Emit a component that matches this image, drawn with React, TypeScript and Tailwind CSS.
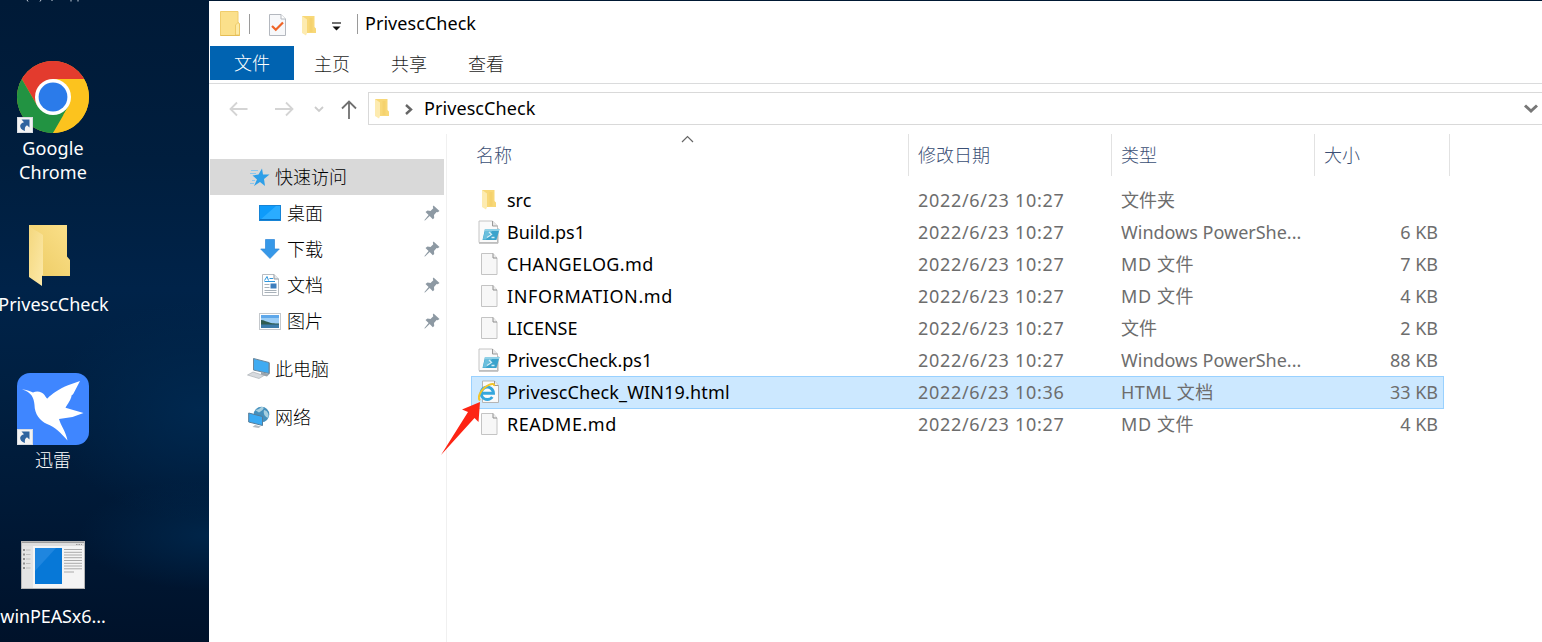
import React from 'react';

const FONT = "font-['Noto_Sans','Noto_Sans_CJK_SC',sans-serif]";

function ShortcutBadge() {
  return (
    <svg className="absolute bottom-0 left-0" width="16" height="16" viewBox="0 0 16 16">
      <rect width="16" height="16" fill="#f3f3f3" />
      <rect x=".5" y=".5" width="15" height="15" fill="none" stroke="#d8dce2" />
      <path d="M4.500 2.500H12.500V10.500L10 8.300C8 9.500 7.500 11.500 8 14 4.500 13 2.800 10.500 3.200 8.500 3.500 6.800 5 5.800 7 5.200Z" fill="#2f649f" />
    </svg>
  );
}

function ChromeLogo() {
  return (
    <svg width="72" height="72" viewBox="0 0 72 72">
      <circle cx="36" cy="36" r="36" fill="#fcc31e" />
      <path d="M36 36 20.400 45 4.820 18A36 36 0 0 1 67.180 18H36Z" fill="#e33b2e" />
      <path d="M4.820 18 20.400 45 36 54H51.600L36 72A36 36 0 0 1 4.820 18Z" fill="#229342" />
      <path d="M36 72 51.600 45 36 36 20.400 45C24 52 30 54 36 54Z" fill="#229342" />
      <path d="M36 18H67.180A36 36 0 0 1 36 72L51.600 45Z" fill="#fcc31e" />
      <circle cx="36" cy="36" r="18" fill="#fff" />
      <circle cx="36" cy="36" r="14.400" fill="#2b7bea" />
    </svg>
  );
}

function BirdLogo() {
  return (
    <svg width="72" height="72" viewBox="0 0 72 72">
      <rect width="72" height="72" rx="13" fill="#3f86ff" />
      <path d="M5 16.500C9 16.500 13 18 16 19.500 20 17.600 25 18.500 27.500 22 28.500 23.500 29.500 25.500 30.500 25.500 34 21.500 43 15.500 51 12.300L63 8 56.500 20.500 55.800 21.500 54.500 22.500C54.500 26 50.500 31 48.500 34.700L66.500 40 55.500 44 42 46C43.500 52 49 59 50.500 67.500 44 60 38 54 30 51 23 48 17.500 41 17.500 32 17 25 14.500 19 5 16.500Z" fill="#fff" />
    </svg>
  );
}

function BigFolder() {
  return (
    <svg width="42" height="62" viewBox="0 0 42 62">
      <defs>
        <linearGradient id="bigBack" x1="0" y1="1" x2="1" y2="0">
          <stop offset="0" stopColor="#eccb63" />
          <stop offset="1" stopColor="#fbe08a" />
        </linearGradient>
        <linearGradient id="bigFlap" x1="0" y1="0" x2="1" y2="1">
          <stop offset="0" stopColor="#f4d77d" />
          <stop offset="1" stopColor="#fce9a9" />
        </linearGradient>
      </defs>
      <path d="M0 0H38V31.500L41 35V51H0Z" fill="url(#bigBack)" />
      <path d="M0 0C3 4 10 7 14 10V50H13V61L0 52Z" fill="url(#bigFlap)" />
    </svg>
  );
}

function AppWindowIcon() {
  return (
    <svg width="64" height="48" viewBox="0 0 64 48">
      <rect width="64" height="48" fill="#f4f4f4" />
      <rect width="64" height="2" fill="#9d9d9d" />
      <rect y="2" width="64" height="3" fill="#dedede" />
      <path d="M55 3.500h6" stroke="#999" strokeDasharray="1.500 1" />
      <rect y="5" width="12" height="43" fill="#e4e4e4" />
      {[9, 13.5, 18, 22.5, 27].map((y) => (
        <g key={y}>
          <rect x="2" y={y - 1} width="2" height="2" fill="#909090" />
          <path d={`M5 ${y}h4.500`} stroke="#b4b4b4" strokeWidth=".8" />
        </g>
      ))}
      <rect x="14" y="7" width="27" height="36" fill="#0778d7" />
      <path d="M14 7H35L14 30Z" fill="#1f86df" />
      {[8.5, 11.3, 14, 16.7, 19.5, 22.3, 25, 27.8].map((y) => (
        <path key={y} d={`M43 ${y}h18`} stroke="#a2a2a2" strokeWidth=".9" />
      ))}
      <path d="M43 31h10" stroke="#a2a2a2" strokeWidth=".9" />
      <rect x=".5" y=".5" width="63" height="47" fill="none" stroke="#b5b5b5" />
    </svg>
  );
}

function SmallFolder() {
  return (
    <svg width="14" height="20" viewBox="0 0 14 20">
      <path d="M0 0H12.500V11L14 12.500V17H0Z" fill="#f8d878" />
      <path d="M0 0 5 3.500V17L4 19.500 0 17Z" fill="#fdebb0" />
      <path d="M9 2v14" stroke="#f0c95c" strokeWidth="3" opacity=".35" />
    </svg>
  );
}

function TitleFolder() {
  return (
    <svg width="21" height="25" viewBox="0 0 21 25">
      <path d="M.5 .5H18V11L19.500 13V24.500H.5Z" fill="#fbe08b" stroke="#f0cd6c" />
      <path d="M15.500 24V14L18 11.500 19.500 13V24Z" fill="#fdeaa5" stroke="#e8c25c" strokeWidth=".8" />
      <path d="M.5 24.500H19.500" stroke="#e5bd55" />
    </svg>
  );
}

function PageIcon() {
  return (
    <svg width="18" height="22" viewBox="0 0 18 22">
      <path d="M1.500 .5H13L17 5V21.500H1.500Z" fill="#f7f7f7" stroke="#c4c4c4" />
      <path d="M13 .5V5H17" fill="#eee" stroke="#8e8e8e" />
    </svg>
  );
}

function PsIcon() {
  return (
    <svg width="22" height="24" viewBox="0 0 22 24">
      <path d="M1 1H14.500L19.500 6V22.500H1Z" fill="#fafafa" stroke="#c4c4c4" />
      <path d="M1 23.200H20V8" fill="none" stroke="#b0b0b0" />
      <path d="M14.500 1V6H19.500" fill="#e8e8e8" stroke="#999" />
      <path d="M7 9H21.500L18.500 20H4.500Z" fill="#3ba3cc" />
      <path d="M7 9H21.500L21 11H6.500Z" fill="#8fd0e6" />
      <path d="M7 11H14L8 19.500H4.800Z" fill="#6bbfdd" />
      <path d="M11 12 13.500 14.500 9 17.500M13.500 17.500H16.500" fill="none" stroke="#d5eef7" strokeWidth="1.300" />
    </svg>
  );
}

function HtmlIcon() {
  return (
    <svg width="22" height="24" viewBox="0 0 22 24">
      <path d="M4.500 1H16.500L20.500 5.500V22.500H4.500Z" fill="#fafafa" stroke="#b5b5b5" />
      <path d="M16.500 1V5.500H20.500" fill="#eee" stroke="#999" />
      <path d="M3.500 13.200H15.500A6.200 6.200 0 1 0 14.300 17" fill="none" stroke="#35a7dd" strokeWidth="2.900" />
      <path d="M2 20.500C-1.500 17 4 8 11 4.800 14 3.500 16.500 3.500 16 6" fill="none" stroke="#f3c52b" strokeWidth="2" />
    </svg>
  );
}

function CheckPage() {
  return (
    <svg width="17" height="22" viewBox="0 0 17 22">
      <path d="M.5 .5H12L16.500 5V21.500H.5Z" fill="#f7f8fa" stroke="#b4b8bf" />
      <path d="M12 .5V5H16.500" fill="#fff" stroke="#b4b8bf" />
      <path d="M3 12 6.800 15.800 14 8.500" fill="none" stroke="#ef6427" strokeWidth="2.200" />
    </svg>
  );
}

function Pin() {
  return (
    <svg width="16" height="16" viewBox="0 0 16 16">
      <path d="M9.500 .5 15.500 6 13.700 7.200 12.600 6.900 10 10 10.200 13 8.800 14.200 5.700 11 1 15.500.3 15.200 4.600 10 1.500 7 3.500 5.600 6.500 6 9.300 3.200 8.800 1.700Z" fill="#8d99a3" />
    </svg>
  );
}

function StarIcon() {
  return (
    <svg width="20" height="19" viewBox="0 0 20 19">
      <path d="M12 .5 13 6.500 19.500 6.500 14 11 15 18 10 14 4 18 7 11.500 2.500 7.500 8.500 6.500Z" fill="#2e9fe8" />
      <path d="M1 2.500h7M0 5.500h6M2 12.500h3M0 15.500h4" stroke="#8bc7ee" />
    </svg>
  );
}

function DesktopIcon() {
  return (
    <svg width="22" height="16" viewBox="0 0 22 16">
      <rect x=".5" y=".5" width="21" height="15" fill="#0e9bfa" stroke="#1684d6" />
      <path d="M1 15 17 1H21V15Z" fill="#2aacff" />
      <path d="M1 14.500h20" stroke="#0b70c2" />
    </svg>
  );
}

function DownloadIcon() {
  return (
    <svg width="20" height="20" viewBox="0 0 20 20">
      <path d="M5.500 .5H14.500V10H19.300L10 19.500 .7 10H5.500Z" fill="#3698e8" stroke="#2c87d8" strokeWidth=".7" />
    </svg>
  );
}

function DocumentIcon() {
  return (
    <svg width="17" height="22" viewBox="0 0 17 22">
      <path d="M.5 .5H12L16.500 5V21.500H.5Z" fill="#fff" stroke="#b8bdc2" />
      <path d="M12 .5V5H16.500" fill="#e8eaec" stroke="#9299a0" />
      <path d="M2.500 6.500 5 2.500 6.500 6.500M7.500 4.500H11M2.500 7.500H13" stroke="#2c95dc" fill="none" />
      <path d="M2.500 10.500h5M2.500 13.500h5M2.500 16.500h12M2.500 18.500h12" stroke="#a8b1b9" />
      <rect x="8.500" y="9.500" width="6" height="5" fill="#3d7ebd" />
    </svg>
  );
}

function PictureIcon() {
  return (
    <svg width="22" height="17" viewBox="0 0 22 17">
      <rect x=".5" y=".5" width="21" height="16" fill="#fff" stroke="#c4c8cc" />
      <rect x="2" y="2" width="18" height="13" fill="#9bcdf5" />
      <rect x="2" y="2" width="18" height="3" fill="#5fa8ea" />
      <path d="M2 7C5 7 8 9 12 10 16 10.500 20 10.500 20 10.500V12H2Z" fill="#2f5c50" />
      <rect x="2" y="11.500" width="18" height="3.500" fill="#3c7ba8" />
    </svg>
  );
}

function ComputerIcon() {
  return (
    <svg width="24" height="22" viewBox="0 0 24 22">
      <path d="M6.500 .5 22 4.500V15.500L6.500 12Z" fill="#3fabf2" stroke="#6b8599" />
      <path d="M22 4.500 23 5V16L22 15.500Z" fill="#8a97a2" />
      <path d="M14 14V17L20 18.500 22.500 16Z" fill="#98a3ac" />
      <path d="M.5 17 6 14 17 17.500 12 20.500Z" fill="#d7dade" stroke="#acb1b6" strokeWidth=".7" />
    </svg>
  );
}

function NetworkIcon() {
  return (
    <svg width="22" height="23" viewBox="0 0 22 23">
      <circle cx="13.500" cy="8.500" r="7.800" fill="#4590bd" />
      <path d="M7 4C11 4 13 1 14 .8 18 1.500 14 5 11 6.500ZM16 4C20 5 21 8 20.500 12 17 11 15 8 16 4Z" fill="#a7cfdf" />
      <path d="M.7 7 14.500 10.500V19.500L.7 16Z" fill="#3aaaf3" stroke="#557c98" />
      <path d="M7 19 13 20.500 10.500 22 4.500 21Z" fill="#b4bbc1" />
    </svg>
  );
}

const files = [
  { icon: 'folder', name: 'src', spacing: '', date: '2022/6/23 10:27', type: '文件夹', size: '' },
  { icon: 'ps', name: 'Build.ps1', spacing: '', date: '2022/6/23 10:27', type: 'Windows PowerShe...', size: '6 KB' },
  { icon: 'page', name: 'CHANGELOG.md', spacing: 'tracking-[0.4px]', date: '2022/6/23 10:27', type: 'MD 文件', size: '7 KB' },
  { icon: 'page', name: 'INFORMATION.md', spacing: 'tracking-[0.6px]', date: '2022/6/23 10:27', type: 'MD 文件', size: '4 KB' },
  { icon: 'page', name: 'LICENSE', spacing: '', date: '2022/6/23 10:27', type: '文件', size: '2 KB' },
  { icon: 'ps', name: 'PrivescCheck.ps1', spacing: '', date: '2022/6/23 10:27', type: 'Windows PowerShe...', size: '88 KB' },
  { icon: 'html', name: 'PrivescCheck_WIN19.html', spacing: 'tracking-[0.14px]', date: '2022/6/23 10:36', type: 'HTML 文档', size: '33 KB', selected: true },
  { icon: 'page', name: 'README.md', spacing: 'tracking-[0.55px]', date: '2022/6/23 10:27', type: 'MD 文件', size: '4 KB' },
];

function typeSpacing(type: string) {
  if (type.startsWith('MD')) return 'tracking-[0.6px]';
  if (type.startsWith('HTML')) return 'tracking-[0.4px]';
  return '';
}

function FileIcon({ kind }: { kind: string }) {
  if (kind === 'folder') return <SmallFolder />;
  if (kind === 'ps') return <PsIcon />;
  if (kind === 'html') return <HtmlIcon />;
  return <PageIcon />;
}

const pinned = [
  { icon: <DesktopIcon />, label: '桌面' },
  { icon: <DownloadIcon />, label: '下载' },
  { icon: <DocumentIcon />, label: '文档' },
  { icon: <PictureIcon />, label: '图片' },
];

function Desktop() {
  return (
    <aside className="flex w-[209px] shrink-0 flex-col overflow-hidden bg-[radial-gradient(ellipse_150px_110px_at_200px_410px,#00284f,transparent),radial-gradient(ellipse_130px_55px_at_209px_535px,#002549,transparent),linear-gradient(180deg,#001a37_0%,#001e3e_25%,#002349_45%,#001f40_62%,#001733_85%,#00122a_100%)] text-white">
      <svg width="106" height="3" viewBox="0 0 106 3" className="shrink-0">
        <path d="M27 0l1 1.500M41 0l-1 1.500M52 0v1M71 0v1.500M78 0v1.500" stroke="#c5d0dc" />
      </svg>
      <div className="flex w-[106px] grow flex-col items-center text-[18px] leading-6">
        <div className="relative mt-[58px] h-[72px] w-[72px]">
          <ChromeLogo />
          <ShortcutBadge />
        </div>
        <div className="mt-[3px] text-center tracking-[0.1px]">Google<br />Chrome</div>
        <div className="mt-[41px] ml-[-6px]"><BigFolder /></div>
        <div className="mt-[5px] whitespace-nowrap pl-px">PrivescCheck</div>
        <div className="relative mt-[57px] h-[72px] w-[72px]">
          <BirdLogo />
          <ShortcutBadge />
        </div>
        <div className="mt-[3px] font-light">迅雷</div>
        <div className="mt-[69px]"><AppWindowIcon /></div>
        <div className="mt-[15px] whitespace-nowrap tracking-[-0.1px]">winPEASx6...</div>
      </div>
    </aside>
  );
}

export default function App() {
  return (
    <div className={`relative flex h-[642px] w-[1542px] overflow-hidden bg-[#001833] text-[18px] leading-6 text-black ${FONT}`}>
      <Desktop />
      <main className="mt-px flex min-w-0 grow flex-col bg-white">
        <div className="flex h-[45px] shrink-0 items-center pl-[11px]">
          <TitleFolder />
          <div className="ml-2 h-[20px] w-px bg-[#9a9a9a]" />
          <div className="ml-[19px] mt-[3px]"><CheckPage /></div>
          <div className="ml-[16px] mt-[5px]"><SmallFolder /></div>
          <svg className="ml-[15px] mt-[6px]" width="11" height="9" viewBox="0 0 11 9">
            <path d="M1 1h9" stroke="#222" strokeWidth="1.300" />
            <path d="M1.500 4.500h8L5.500 8.500Z" fill="#111" />
          </svg>
          <div className="ml-[15px] h-[20px] w-px bg-[#9a9a9a]" />
          <div className="mb-[2px] ml-[7px] tracking-[0.05px]">PrivescCheck</div>
        </div>

        <nav className="flex h-[38px] shrink-0 border-b border-[#dadbdc] pl-px font-light text-[#1e1e1e]">
          <div className="flex h-[34px] w-[84px] items-center justify-center bg-[#0063b1] text-white">文件</div>
          <div className="ml-5 pt-[6px]">主页</div>
          <div className="ml-[41px] pt-[6px]">共享</div>
          <div className="ml-[41px] pt-[6px]">查看</div>
        </nav>

        <div className="flex h-[50px] shrink-0 pt-2">
          <div className="flex h-[34px] w-[159px] shrink-0 items-center pl-[20px]">
            <svg width="19" height="16" viewBox="0 0 19 16" fill="none" stroke="#d4d4d4" strokeWidth="1.800"><path d="M18.500 8H2M8 1.500 1.500 8 8 14.500" /></svg>
            <svg className="ml-[26px]" width="20" height="16" viewBox="0 0 20 16" fill="none" stroke="#d4d4d4" strokeWidth="1.800"><path d="M1 8H18M12 1.500 18.500 8 12 14.500" /></svg>
            <svg className="ml-[20px]" width="10" height="7" viewBox="0 0 10 7" fill="none" stroke="#cccccc" strokeWidth="1.800"><path d="M1 1 5 5 9 1" /></svg>
            <svg className="ml-[17px] mt-[2px]" width="16" height="20" viewBox="0 0 16 20" fill="none" stroke="#707070" strokeWidth="1.800"><path d="M8 19V2M1 8.500 8 1.500 15 8.500" /></svg>
          </div>
          <div className="flex h-[33px] grow items-center border border-r-0 border-[#d9d9d9] pl-[6px]">
            <SmallFolder />
            <svg className="ml-[16px] mt-px" width="8" height="11" viewBox="0 0 8 11" fill="none" stroke="#666" strokeWidth="2.400"><path d="M1 1 6 5.500 1 10" /></svg>
            <div className="mb-[2px] ml-[11px] tracking-[0.08px]">PrivescCheck</div>
            <svg className="ml-auto mr-[4px] mt-px" width="14" height="10" viewBox="0 0 14 10" fill="none" stroke="#777" strokeWidth="3"><path d="M1 1.500 7 7 13 1.500" /></svg>
          </div>
        </div>

        <div className="flex grow">
          <div className="flex w-[238px] shrink-0 flex-col border-r border-[#f0f0f0] pt-[25px] font-light">
            <div className="ml-px flex h-9 w-[234px] items-center bg-[#d9d9d9] pl-[40px]">
              <StarIcon />
              <span className="ml-[5px]">快速访问</span>
            </div>
            {pinned.map((p) => (
              <div key={p.label} className="flex h-9 items-center pl-[50px] pr-[6px]">
                <span className="flex w-[22px] justify-center">{p.icon}</span>
                <span className="ml-[6px] grow">{p.label}</span>
                <Pin />
              </div>
            ))}
            <div className="mt-3 flex h-9 items-center pl-[38px]">
              <span className="flex w-6 justify-center"><ComputerIcon /></span>
              <span className="ml-[4px]">此电脑</span>
            </div>
            <div className="mt-3 flex h-9 items-center pl-[38px]">
              <span className="flex w-6 justify-center"><NetworkIcon /></span>
              <span className="ml-[4px]">网络</span>
            </div>
          </div>

          <div className="flex grow flex-col pl-6">
            <div className="flex h-[42px] w-[979px] shrink-0 pt-[9px] font-light text-[#3b4f75]">
              <div className="relative w-[437px] pl-[5px]">
                名称
                <svg className="absolute left-[210px] top-[-8px]" width="13" height="8" viewBox="0 0 13 8" fill="none" stroke="#666" strokeWidth="1.200"><path d="M1 7 6.500 1.500 12 7" /></svg>
              </div>
              <div className="mt-[-9px] w-[203px] border-l border-[#e2e2e2] pl-[9px] pt-[9px]">修改日期</div>
              <div className="mt-[-9px] w-[203px] border-l border-[#e2e2e2] pl-[9px] pt-[9px]">类型</div>
              <div className="mt-[-9px] w-[136px] border-x border-[#e2e2e2] pl-[9px] pt-[9px]">大小</div>
            </div>
            <div className="mt-2 flex flex-col text-[#6d6d6d]">
              {files.map((f) => (
                <div
                  key={f.name}
                  className={`flex w-[973px] items-center ${f.selected ? '-mb-px h-[33px] bg-[#cce8ff] pb-px outline outline-1 -outline-offset-1 outline-[#99d1ff]' : 'h-8'}`}
                >
                  <span className="flex w-[34px] shrink-0 justify-center pl-px"><FileIcon kind={f.icon} /></span>
                  <span className={`w-[413px] shrink-0 pl-[2px] text-black ${f.spacing}`}>{f.name}</span>
                  <span className="w-[203px] shrink-0 tracking-[0.68px]">{f.date}</span>
                  <span className={`w-[203px] shrink-0 ${typeSpacing(f.type)}`}>{f.type}</span>
                  <span className="grow pr-[6px] text-right">{f.size}</span>
                </div>
              ))}
            </div>
          </div>
        </div>
      </main>
      <svg className="absolute left-[440px] top-[401px]" width="42" height="56" viewBox="0 0 42 56">
        <path d="M40 1 38.500 21 34.500 17 1 54 28 11 22 8.500Z" fill="#fd2414" />
      </svg>
    </div>
  );
}
